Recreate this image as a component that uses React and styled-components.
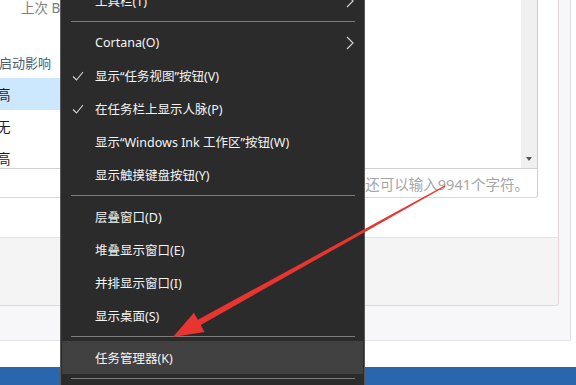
import React from "react";
import styled, { createGlobalStyle } from "styled-components";

const Global = createGlobalStyle`
  html, body { margin: 0; padding: 0; background: #fff; }
  body { width: 576px; height: 385px; overflow: hidden; }
  * { box-sizing: border-box; }
`;

const Page = styled.div`
  position: relative;
  width: 576px;
  height: 385px;
  overflow: hidden;
  display: flex;
  flex-direction: column;
  font-family: "Noto Sans", "Noto Sans CJK SC", sans-serif;
`;

const Outer = styled.div`
  width: 571px;
  height: 341px;
  flex: none;
  background: #f7f7f9;
  border-right: 1px solid #dfdfe3;
  border-bottom: 1px solid #e4e4e7;
`;

const Panel = styled.div`
  width: 559px;
  height: 306px;
  background: #fff;
  border-right: 1px solid #e6d4da;
  border-bottom: 1px solid #e6d4da;
  border-bottom-right-radius: 4px;
  overflow: hidden;
  display: flex;
  flex-direction: column;
`;

const PanelBody = styled.div`
  height: 237px;
  flex: none;
  background: #fff;
`;

const PanelFooter = styled.div`
  flex: 1;
  background: #f4f4f5;
  border-top: 1px solid #e2e2e4;
`;

const Editor = styled.div`
  width: 538px;
  height: 198px;
  display: flex;
  flex-direction: column;
  border-right: 1px solid #cfcfcf;
  border-bottom: 1px solid #d9d9d9;
  border-bottom-right-radius: 3px;
  overflow: hidden;
`;

const EditorContent = styled.div`
  height: 168px;
  flex: none;
  display: flex;
`;

const Shot = styled.div`
  flex: 1;
  overflow: hidden;
  display: flex;
  flex-direction: column;
  background: #fff;
`;

const TopNote = styled.div`
  flex: none;
  height: 16px;
  line-height: 16px;
  margin-left: 21px;
  font-size: 13.5px;
  color: #7d7d7d;
  white-space: nowrap;
`;

const Table = styled.div`
  flex: none;
  width: 300px;
  margin-top: 30px;
  margin-left: -3px;
  display: flex;
  flex-direction: column;
`;

const TableHead = styled.div`
  flex: none;
  height: 32px;
  display: flex;
  align-items: center;
  padding-left: 2px;
  font-size: 13px;
  color: #4d5d73;
  white-space: nowrap;
`;

const Row = styled.div`
  height: 32px;
  flex: none;
  display: flex;
  align-items: center;
  font-size: 13.5px;
  color: #1e1e1e;
  background: ${(p) => (p.$selected ? "#cce8ff" : "transparent")};
`;

const Scrollbar = styled.div`
  width: 16px;
  flex: none;
  background: #f0f0f0;
  display: flex;
  flex-direction: column;
  justify-content: flex-end;
  align-items: center;
  padding-bottom: 7px;
`;

const ArrowDown = styled.div`
  width: 0;
  height: 0;
  border-left: 3.5px solid transparent;
  border-right: 3.5px solid transparent;
  border-top: 4px solid #555;
`;

const Counter = styled.div`
  flex: 1;
  border-top: 1px solid #d2d2d2;
  display: flex;
  align-items: center;
  justify-content: flex-end;
  padding-right: 8px;
  font-size: 14.5px;
  color: #a6a6a6;
  white-space: nowrap;
`;

const WhiteStrip = styled.div`
  height: 26px;
  flex: none;
  background: #fff;
`;

const BlueBar = styled.div`
  flex: 1;
  background: #2a66ad;
`;

const Menu = styled.div`
  position: absolute;
  left: 60px;
  top: -17px;
  width: 305px;
  background: #2b2b2b;
  border: 1px solid #585858;
  padding: 0 1px;
  display: flex;
  flex-direction: column;
  color: #f4f4f4;
  font-family: "Noto Sans", "Noto Sans CJK SC", sans-serif;
  font-size: 12.5px;
`;

const Item = styled.div`
  height: 33px;
  display: flex;
  align-items: center;
  padding-left: 10px;
  padding-right: 9px;
  background: ${(p) => (p.$hot ? "#414141" : "transparent")};
  white-space: nowrap;
`;

const IconSlot = styled.span`
  width: 23px;
  flex: none;
  display: flex;
  align-items: center;
`;

const Label = styled.span`
  flex: 1;
`;

const Separator = styled.div`
  height: 9px;
  display: flex;
  align-items: center;
  padding: 0 8px 0 9px;
  &::after {
    content: "";
    flex: 1;
    height: 1px;
    background: #7c7c7c;
  }
`;

const Overlay = styled.svg`
  position: absolute;
  left: 0;
  top: 0;
  pointer-events: none;
`;

const Check = () => (
  <svg width="12" height="12" viewBox="0 0 12 12">
    <path d="M1 6.5 L4.5 10 L11 2" fill="none" stroke="#d8d8d8" strokeWidth="1.1" />
  </svg>
);

const Chevron = () => (
  <svg width="8" height="14" viewBox="0 0 8 14">
    <path d="M1 1 L7 7 L1 13" fill="none" stroke="#cfcfcf" strokeWidth="1.2" />
  </svg>
);

const menu = [
  { label: "工具栏(T)", sub: true },
  { sep: true },
  { label: "Cortana(O)", sub: true },
  { label: "显示“任务视图”按钮(V)", check: true },
  { label: "在任务栏上显示人脉(P)", check: true },
  { label: "显示“Windows Ink 工作区”按钮(W)" },
  { label: "显示触摸键盘按钮(Y)" },
  { sep: true },
  { label: "层叠窗口(D)" },
  { label: "堆叠显示窗口(E)" },
  { label: "并排显示窗口(I)" },
  { label: "显示桌面(S)" },
  { sep: true },
  { label: "任务管理器(K)", hot: true },
  { sep: true },
  { label: "锁定任务栏(L)" },
];

export default function App() {
  return (
    <>
      <Global />
      <Page>
        <Outer>
          <Panel>
            <PanelBody>
              <Editor>
                <EditorContent>
                  <Shot>
                    <TopNote>上次 BIOS 所用时间:</TopNote>
                    <Table>
                      <TableHead>启动影响</TableHead>
                      <Row $selected>高</Row>
                      <Row>无</Row>
                      <Row>高</Row>
                    </Table>
                  </Shot>
                  <Scrollbar>
                    <ArrowDown />
                  </Scrollbar>
                </EditorContent>
                <Counter>您还可以输入9941个字符。</Counter>
              </Editor>
            </PanelBody>
            <PanelFooter />
          </Panel>
        </Outer>
        <WhiteStrip />
        <BlueBar />

        <Menu>
          {menu.map((m, i) =>
            m.sep ? (
              <Separator key={i} />
            ) : (
              <Item key={i} $hot={m.hot}>
                <IconSlot>{m.check && <Check />}</IconSlot>
                <Label>{m.label}</Label>
                {m.sub && <Chevron />}
              </Item>
            )
          )}
        </Menu>

        <Overlay width="576" height="385" viewBox="0 0 576 385">
          <polygon
            points="444.7,185.4 197.8,319.8 193.9,312.8 173,337 204.6,332 200.7,325 445.3,186.6"
            fill="#e8352f"
          />
        </Overlay>
      </Page>
    </>
  );
}
